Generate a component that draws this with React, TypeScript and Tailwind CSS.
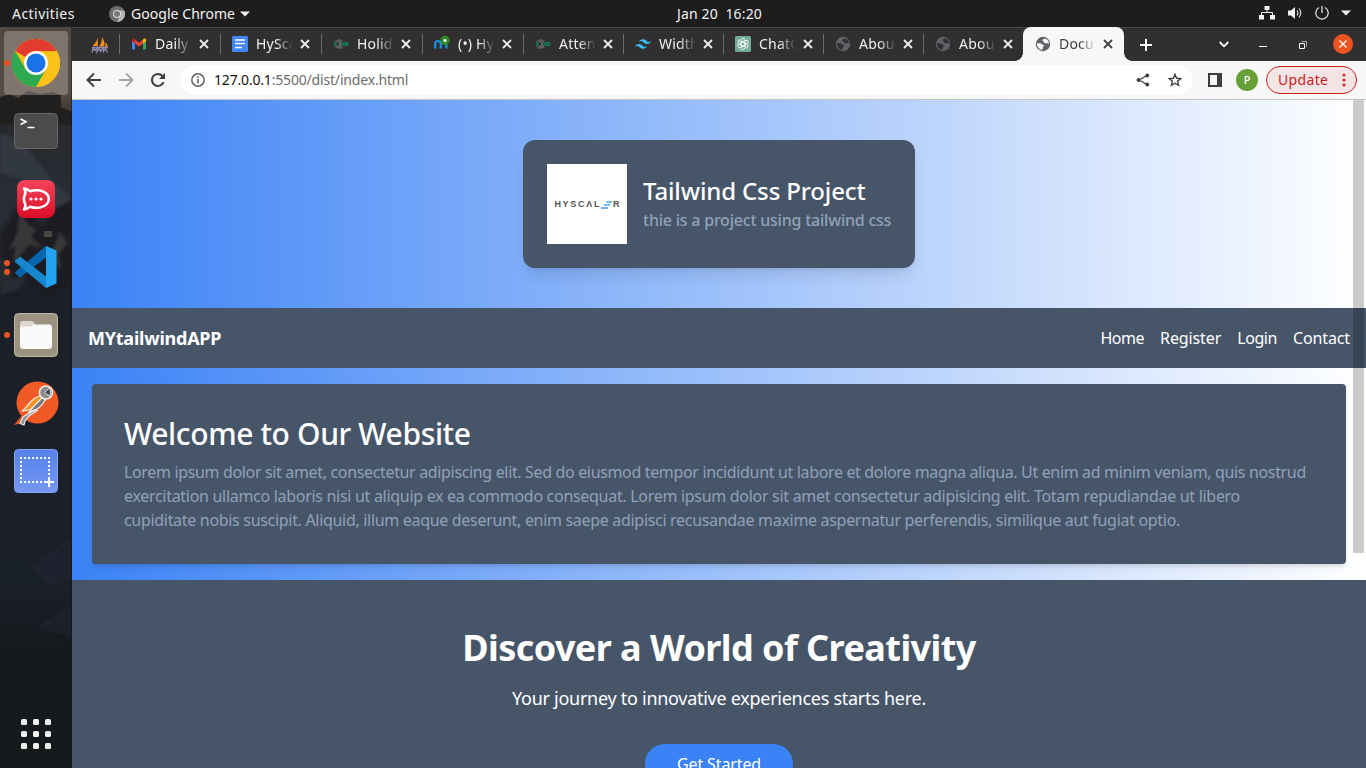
import React from "react";

type TabInfo = { label: string; icon: React.ReactNode; width: string };

function Globe({ land }: { land: string }) {
  return (
    <svg width="16" height="16" viewBox="0 0 16 16">
      <circle cx="8" cy="8" r="7.2" fill="#5f6368" />
      <path
        d="M2 7.200h3.200c1.300.1 1.500 1.700 2.900 1.600 1.100.1 1 1.200.3 1.700-.9.500-.5 1.900-1 3.300C4.300 13.600 1.800 10.800 2 7.200zM9.500 2.200c-.3 1.300-2.300.9-2.100 2.100.1 1 1.300.8 1.500 1.800.3 1.100 1.500 1.700 2.700 1.100.9-.4 1.600.4 2.300 1.200.4-2.900-1.500-5.400-4.400-6.200z"
        fill={land}
      />
    </svg>
  );
}

function Gmail() {
  return (
    <svg width="16" height="16" viewBox="0 0 16 16">
      <path d="M1 4v8.500c0 .6.400 1 1 1h2V7z" fill="#4285f4" />
      <path d="M15 4v8.500c0 .6-.4 1-1 1h-2V7z" fill="#34a853" />
      <path d="M4 3.600 8 6.700l4-3.100v3.900l-4 3-4-3z" fill="#ea4335" />
      <path d="M1 4c0-1.500 1.600-2 2.600-.9l.4.500v3.900L1 5.200z" fill="#c5221f" />
      <path d="M15 4c0-1.500-1.600-2-2.600-.9l-.4.500v3.900l3-2.300z" fill="#fbbc04" />
    </svg>
  );
}

function Sails() {
  return (
    <svg width="18" height="18" viewBox="0 0 18 18">
      <path d="M6.500 1.500 7 10H1.500C4 8 6 5 6.500 1.500zM11 1c2 3 2.800 6 2.500 9.500H8.200C10 8 11 5 11 1zM14.500 6c1.500 1.500 2 3 2 5h-2z" fill="#f29111" />
      <path d="M1 16.500 2 12l2 2.500L6 12v4l2.500-4 1 3.500 3-3.500v3.500l2-3 2 4M1 11.500h16" fill="none" stroke="#8f8bb0" strokeWidth="1.300" />
    </svg>
  );
}

function Docs() {
  return (
    <svg width="16" height="16" viewBox="0 0 16 16">
      <rect width="16" height="16" rx="1.500" fill="#4285f4" />
      <path d="M3 4h10M3 7.500h10M3 11.500h7" stroke="#fff" strokeWidth="1.700" />
    </svg>
  );
}

function Gop() {
  return (
    <svg width="16" height="16" viewBox="0 0 16 16">
      <path d="M2.500 3.800 4.500 6h3L9.500 3.800M4.800 3.500 6 4.700 7.200 3.500M2.500 12.300l2-2.200h3l2 2.200M4.800 12.500 6 11.300l1.200 1.200" stroke="#707070" strokeWidth="1.100" fill="none" />
      <path d="M1 5.500 3.300 8 1 10.300" stroke="#148a5e" strokeWidth="1.200" fill="none" />
      <path d="M8.500 7H6.800v2.200h1.700" stroke="#777" fill="none" />
      <circle cx="9.800" cy="8" r="1.200" stroke="#148a5e" strokeWidth="1.100" fill="none" />
      <path d="M12.300 10.500V6.600h1.200q1.500 0 1.500 1.300t-1.500 1.300h-1.200" stroke="#148a5e" strokeWidth="1.200" fill="none" />
    </svg>
  );
}

function Meet() {
  return (
    <svg width="16" height="16" viewBox="0 0 16 16" className="overflow-visible">
      <path d="M1.200 12.500V8q0-3 2.800-3t2.800 3v4.500M6.800 8q0-3 2.800-3t2.800 3v4.500" fill="none" stroke="#1695e8" strokeWidth="2.200" />
      <circle cx="11" cy="4.500" r="4.700" fill="#2f8a2b" />
      <circle cx="11" cy="4.500" r="1.500" fill="#fff" />
    </svg>
  );
}

function TailwindMark() {
  return (
    <svg width="16" height="16" viewBox="0 0 24 24">
      <path
        fill="#38bdf8"
        d="M12.001 4.800c-3.200 0-5.200 1.600-6 4.800 1.200-1.600 2.600-2.200 4.200-1.800.913.228 1.565.890 2.288 1.624C13.666 10.618 15.027 12 18.001 12c3.200 0 5.200-1.600 6-4.800-1.200 1.600-2.600 2.200-4.200 1.800-.913-.228-1.565-.890-2.288-1.624C16.337 6.182 14.976 4.800 12.001 4.800zm-6 7.200c-3.200 0-5.200 1.600-6 4.800 1.200-1.600 2.600-2.200 4.200-1.800.913.228 1.565.890 2.288 1.624 1.177 1.194 2.538 2.576 5.512 2.576 3.200 0 5.200-1.600 6-4.800-1.200 1.600-2.600 2.200-4.200 1.800-.913-.228-1.565-.890-2.288-1.624C10.337 13.382 8.976 12 6.001 12z"
      />
    </svg>
  );
}

function ChatMark() {
  return (
    <svg width="16" height="16" viewBox="0 0 16 16">
      <rect width="16" height="16" rx="1.500" fill="#74aa9c" />
      <g fill="none" stroke="#fff" strokeWidth="0.900">
        {[0, 60, 120, 180, 240, 300].map((a) => (
          <path key={a} transform={`rotate(${a} 8 8)`} d="M6 9.200V4.600a2.400 2.400 0 0 1 4.300-1.200M6 6.800l3.600-2.100" />
        ))}
      </g>
    </svg>
  );
}

function Cross({ className }: { className: string }) {
  return (
    <svg width="10" height="10" viewBox="0 0 10 10" className={className}>
      <path d="m1 1 8 8M9 1 1 9" stroke="currentColor" strokeWidth="1.800" fill="none" />
    </svg>
  );
}

const tabs: TabInfo[] = [
  { label: "Daily S", icon: <Gmail />, width: "w-[101px]" },
  { label: "HySca", icon: <Docs />, width: "w-[101px]" },
  { label: "Holid", icon: <Gop />, width: "w-[101px]" },
  { label: "(•) Hy", icon: <Meet />, width: "w-[101px]" },
  { label: "Atten", icon: <Gop />, width: "w-[100px]" },
  { label: "Width", icon: <TailwindMark />, width: "w-[100px]" },
  { label: "ChatG", icon: <ChatMark />, width: "w-[100px]" },
  { label: "Abou", icon: <Globe land="#322f31" />, width: "w-[100px]" },
  { label: "Abou", icon: <Globe land="#322f31" />, width: "w-[100px]" },
];

function TopBar() {
  return (
    <div className="flex h-[27px] shrink-0 items-center bg-[#1d1d1d] text-[14px] text-[#f2f2f2]">
      <span className="ml-3 w-[97px] tracking-[0.45px]">Activities</span>
      <svg width="16" height="16" viewBox="0 0 16 16">
        <circle cx="8" cy="8" r="8" fill="#6d6d6d" />
        <path d="M8 4.500h7.200A8 8 0 0 1 8 16l3-6z" fill="#b5b5b5" />
        <circle cx="8" cy="8" r="4" fill="#ddd" />
        <circle cx="8" cy="8" r="3" fill="#777" />
      </svg>
      <span className="ml-[6px] w-[109px] whitespace-nowrap tracking-[0.05px]">Google Chrome</span>
      <svg width="10" height="6" viewBox="0 0 10 6">
        <path d="M0 .5h10L5 5.500z" fill="#f2f2f2" />
      </svg>
      <span className="ml-[427px] w-[90px] pb-px whitespace-pre tracking-[0.15px]">Jan 20  16:20</span>
      <div className="ml-auto flex items-center pr-[15px] pb-px">
        <svg width="16" height="14" viewBox="0 0 16 14">
          <path d="M5.500 0h5v4h-5zM0 9h5v4.500H0zM11 9h5v4.500h-5z" fill="#f2f2f2" />
          <path d="M8 4v3M2.500 9V6.500h11V9" stroke="#f2f2f2" fill="none" />
        </svg>
        <svg width="15" height="14" viewBox="0 0 15 14" className="ml-[13px]">
          <path d="M0 4.500h3L7 1v12L3 9.500H0z" fill="#f2f2f2" />
          <path d="M9 4.500q1.800 2.500 0 5M11 2.500q3.500 4.500 0 9" stroke="#ddd" fill="none" strokeWidth="1.200" />
        </svg>
        <svg width="14" height="14" viewBox="0 0 14 14" className="ml-[12px]">
          <path d="M4 1.500a6.200 6.200 0 1 0 6 0M7 0v7" stroke="#e8e8e8" fill="none" strokeWidth="1.200" />
        </svg>
        <svg width="10" height="6" viewBox="0 0 10 6" className="ml-3">
          <path d="M0 .5h10L5 5.500z" fill="#f2f2f2" />
        </svg>
      </div>
    </div>
  );
}

function Wallpaper() {
  return (
    <svg className="absolute inset-0" width="72" height="741" viewBox="0 0 72 741">
      <defs>
        <linearGradient id="sky" x1="0" y1="0" x2="0" y2="1">
          <stop offset="0" stopColor="#51483f" />
          <stop offset="0.090" stopColor="#574c43" />
          <stop offset="0.130" stopColor="#28292d" />
          <stop offset="0.250" stopColor="#282d36" />
          <stop offset="0.360" stopColor="#1b2028" />
          <stop offset="0.750" stopColor="#1a2029" />
          <stop offset="0.850" stopColor="#15191d" />
          <stop offset="1" stopColor="#15191c" />
        </linearGradient>
        <filter id="soft" x="-10%" y="-10%" width="120%" height="120%">
          <feGaussianBlur stdDeviation="1.600" />
        </filter>
      </defs>
      <rect width="72" height="741" fill="url(#sky)" />
      <path d="M0 70 10 67l8 4 10-7 12 3 12-2 9 3v12l11 5v13L58 97 40 103 22 94 0 98z" fill="#22201f" />
      <g filter="url(#soft)">
        <path d="M0 106 20 112l30 38 22 22v24l-30-24-20-20-22-6z" fill="#3a414b" opacity=".55" />
        <path d="M0 205 9 195l7-15 8-5 18 24 14-18 16-9v85L50 270 20 250 0 262z" fill="#1c1e22" />
        <path d="m20 185 7 12 9 6-5 7 12 12-13-5-8 9-9 10 3-18-7 5 8-16zM60 205l7 11-9 12 3 14-12-8z" fill="#55534f" opacity=".5" />
        <path d="m0 230 8 6 5 16 14-4-10 15-17 5z" fill="#40474f" opacity=".3" />
        <path d="m30 540 40-28v40l-20 6zM36 600l36-20v30z" fill="#252e3b" opacity=".35" />
      </g>
      <path d="M44 204h8v6h-8z" fill="#6b6257" opacity=".6" />
      <path d="M71.500 0v741" stroke="#111" strokeOpacity=".5" />
    </svg>
  );
}

function Slot({ children, dots = 0, active = false }: { children: React.ReactNode; dots?: number; active?: boolean }) {
  return (
    <div className="relative flex h-[68px] w-full shrink-0 items-center justify-center">
      <div
        className={
          active
            ? "flex h-16 w-16 items-center justify-center rounded-[4px] bg-[#cfc6bd]/35"
            : "flex h-16 w-16 items-center justify-center"
        }
      >
        {children}
      </div>
      <div className="absolute left-1 flex flex-col gap-[3px]">
        {Array.from({ length: dots }, (_, i) => (
          <span key={i} className="size-[6px] rounded-full bg-[#e95420]" />
        ))}
      </div>
    </div>
  );
}

function Dock() {
  return (
    <aside className="relative flex w-[72px] shrink-0 flex-col overflow-hidden pt-[2px]">
      <Wallpaper />
      <Slot dots={1} active>
        <svg width="48" height="48" viewBox="0 0 48 48">
          <circle cx="24" cy="24" r="24" fill="#fbc116" />
          <path d="M24 24 3.200 12A24 24 0 0 1 44.800 12z" fill="#e33b2e" />
          <path d="M3.200 12A24 24 0 0 0 24 48l10.400-18L24 24 13.600 30z" fill="#2da94f" />
          <path d="M24 12h20.800A24 24 0 0 1 24 48l10.400-18z" fill="#fbc116" />
          <circle cx="24" cy="24" r="12" fill="#fff" />
          <circle cx="24" cy="24" r="9.500" fill="#1a73e8" />
        </svg>
      </Slot>
      <Slot>
        <svg width="44" height="36" viewBox="0 0 44 36">
          <rect x=".5" y=".5" width="43" height="35" rx="4" fill="#4b4b4b" stroke="#696969" />
          <path d="m6.500 6 5.500 2.700-5.500 2.800M13.500 14.500h7" fill="none" stroke="#fff" strokeWidth="1.600" />
        </svg>
      </Slot>
      <Slot>
        <svg width="38" height="38" viewBox="0 0 38 38">
          <defs>
            <linearGradient id="rocket" x1="0" y1="0" x2="0" y2="1">
              <stop offset="0" stopColor="#f5455c" />
              <stop offset="1" stopColor="#db0c27" />
            </linearGradient>
          </defs>
          <rect width="38" height="38" rx="8" fill="url(#rocket)" />
          <path d="M7 8.500q4 .5 6 2.800 5-1.700 10-.8 8.700 2 8.700 8.500t-8.700 8.500q-5 1-10-.8-2.500 2.300-6 2.800 2.300-2.700 1-6-2.200-4.500 0-9 1.300-3.300-1-6z" fill="none" stroke="#fff" strokeWidth="2.500" strokeLinejoin="round" />
          <g fill="#fff">
            <circle cx="14" cy="19" r="1.600" />
            <circle cx="19" cy="19" r="1.600" />
            <circle cx="24" cy="19" r="1.600" />
          </g>
        </svg>
      </Slot>
      <Slot dots={2}>
        <svg width="42" height="42" viewBox="0 0 42 42">
          <path d="M0 26.500 31 0v11.500L5 31.500z" fill="#0c66ac" />
          <path d="M0 26.500 4.500 31.500 31 11V0z" fill="#0766ad" />
          <path d="M5 10.500 0 14.500 0 16 31 42V30.500z" fill="#1686ce" />
          <path d="m31 0 10.500 4.500v33L31 42z" fill="#23a2f1" />
        </svg>
      </Slot>
      <Slot dots={1}>
        <svg width="44" height="44" viewBox="0 0 44 44">
          <rect x=".5" y=".5" width="43" height="43" rx="4" fill="#9b9280" stroke="#c0b8a7" />
          <path d="M6 16V11q0-3 3-3h8q2 0 3 1.500l2 2.500v6H6z" fill="#ded9cd" />
          <path d="M6 15q0-1.500 2-1.500h9l3-2h15.500Q38 11.500 38 14v19q0 3-3 3H9q-3 0-3-3z" fill="#faf9f8" />
        </svg>
      </Slot>
      <Slot>
        <svg width="46" height="46" viewBox="0 0 46 46">
          <circle cx="24.500" cy="22.500" r="21" fill="#f15a24" />
          <path d="M1 45 10 34v9z" fill="#e8511d" />
          <path d="m20 31-10 6-3 6.500 4 1.500 1-4 4-5 9-6z" fill="#8f9193" stroke="#eee" strokeWidth="1.200" />
          <path d="M29 15.500q3 3 3 5-3 5-7 8l-9 3.500z" fill="#77797b" stroke="#eee" strokeWidth="1.300" />
          <path d="M28 15.500q-6 1.500-11 7L9.500 31l8-1.500L29 18z" fill="#f7931e" stroke="#eee" strokeWidth="1.200" />
          <circle cx="33" cy="12.500" r="6.500" fill="#8b8b8b" stroke="#eee" strokeWidth="1.500" />
          <path d="m31.500 12.500 5-4.500q2.500 4 0 8z" fill="#464646" stroke="#eee" strokeWidth=".9" />
        </svg>
      </Slot>
      <Slot>
        <svg width="44" height="44" viewBox="0 0 44 44">
          <defs>
            <linearGradient id="shot" x1="0" y1="0" x2="0" y2="1">
              <stop offset="0" stopColor="#5681e9" />
              <stop offset="1" stopColor="#7597f5" />
            </linearGradient>
          </defs>
          <rect x=".5" y=".5" width="43" height="43" rx="4" fill="url(#shot)" stroke="#86a5f5" />
          <path d="M6 9h30M6 33h24M7 12v20M35 12v16" stroke="#fff" strokeWidth="2" strokeDasharray="2 2" />
          <path d="M35 28v10M30 33h10" stroke="#fff" strokeWidth="2" />
        </svg>
      </Slot>
      <div className="relative mt-auto mb-[19px] grid grid-cols-3 gap-[6px] self-center">
        {Array.from({ length: 9 }, (_, i) => (
          <span key={i} className="size-[6px] rounded-[1.500px] bg-[#f4f2ef]" />
        ))}
      </div>
    </aside>
  );
}

function TabStrip() {
  return (
    <div className="flex h-[34px] shrink-0 border-t border-[#484648] bg-[#322f31]">
      <div className="flex w-[47px] items-center justify-end pr-[10px]">
        <Sails />
      </div>
      {tabs.map((t, i) => (
        <div key={i} className={`flex items-center pb-px ${t.width}`}>
          <span className="h-5 w-px bg-[#6b696a]" />
          <span className="ml-[11px] w-4">{t.icon}</span>
          <span className="ml-2 w-[37px] overflow-hidden pb-px text-[14px] tracking-[0.2px] whitespace-nowrap text-[#f0f0f0] [mask-image:linear-gradient(90deg,#000_55%,transparent)]">
            {t.label}
          </span>
          <Cross className="ml-[7px] text-[#f0f0f0]" />
        </div>
      ))}
      <div className="relative -mt-px flex h-[34px] w-[101px] items-center rounded-t-[8px] bg-[#f7f7f7]">
        <span className="absolute -left-2 bottom-0 size-2 bg-[radial-gradient(circle_at_0_0,transparent_7.500px,#f7f7f7_8px)]" />
        <span className="absolute -right-2 bottom-0 size-2 bg-[radial-gradient(circle_at_100%_0,transparent_7.500px,#f7f7f7_8px)]" />
        <span className="ml-3 w-4">
          <Globe land="#f7f7f7" />
        </span>
        <span className="ml-2 w-[37px] overflow-hidden pb-px text-[14px] tracking-[0.2px] whitespace-nowrap text-[#3c4043] [mask-image:linear-gradient(90deg,#000_55%,transparent)]">
          Docu
        </span>
        <Cross className="ml-[7px] text-[#3c4043]" />
      </div>
      <div className="flex flex-1 items-center text-white">
        <svg width="12" height="12" viewBox="0 0 12 12" className="ml-4">
          <path d="M6 0v12M0 6h12" stroke="currentColor" strokeWidth="2" />
        </svg>
        <svg width="10" height="7" viewBox="0 0 10 7" className="ml-auto">
          <path d="m.7 1 4.300 4.300L9.300 1" stroke="currentColor" strokeWidth="1.800" fill="none" />
        </svg>
        <span className="mt-1 ml-[30px] h-px w-2 bg-white" />
        <svg width="8" height="8" viewBox="0 0 8 8" className="ml-8">
          <path d="M.5 2.500h5v5h-5z" stroke="#fff" fill="none" />
          <path d="M2.500.5h5v5" stroke="#aaa" fill="none" />
        </svg>
        <span className="mr-[13px] mb-px ml-[26px] flex size-5 items-center justify-center rounded-full bg-[#e95420]">
          <svg width="8" height="8" viewBox="0 0 8 8">
            <path d="m.5.5 7 7M7.500.5l-7 7" stroke="#fff" strokeWidth="1.200" />
          </svg>
        </span>
      </div>
    </div>
  );
}

function Toolbar() {
  return (
    <div className="flex h-[39px] shrink-0 items-center border-b border-[#c4c4c2] bg-[#f7f7f7] text-[#3c3f42]">
      <svg width="16" height="16" viewBox="0 0 16 16" className="ml-[14px]">
        <path d="M15 8H2M8 1.500 1.500 8 8 14.500" stroke="currentColor" strokeWidth="1.900" fill="none" />
      </svg>
      <svg width="16" height="16" viewBox="0 0 16 16" className="ml-4 text-[#a5a6a7]">
        <path d="M1 8h13M8 1.500 14.500 8 8 14.500" stroke="currentColor" strokeWidth="1.900" fill="none" />
      </svg>
      <svg width="16" height="16" viewBox="0 0 16 16" className="ml-4">
        <path d="M13.500 10.200A6 6 0 1 1 12.400 4L14 5.500" stroke="currentColor" strokeWidth="2" fill="none" />
        <path d="M15 1v6H9z" fill="currentColor" />
      </svg>
      <div className="ml-[14px] flex h-[30px] w-[1013px] items-center rounded-full bg-white px-[11px]">
        <svg width="14" height="14" viewBox="0 0 14 14" className="text-[#5f6368]">
          <circle cx="7" cy="7" r="6.200" stroke="currentColor" strokeWidth="1.500" fill="none" />
          <path d="M7 6v4.500M7 3.300v1.600" stroke="currentColor" strokeWidth="1.600" />
        </svg>
        <span className="ml-[9px] pb-[2px] text-[14px] tracking-[-0.18px] text-[#6a6c6f]">
          <span className="text-[#111]">127.0.0.1</span>:5500/dist/index.html
        </span>
        <svg width="14" height="14" viewBox="0 0 14 14" className="ml-auto">
          <path d="M11 2.500 3 7l8 4.500" stroke="currentColor" strokeWidth="1.300" fill="none" />
          <g fill="currentColor">
            <circle cx="11.200" cy="2.500" r="1.900" />
            <circle cx="2.500" cy="7" r="1.900" />
            <circle cx="11.200" cy="11.500" r="1.900" />
          </g>
        </svg>
        <svg width="14" height="14" viewBox="0 0 14 14" className="ml-[18px]">
          <path d="m7 1.500 1.600 3.800 4.100.3-3.100 2.700 1 4L7 10.200l-3.600 2.100 1-4L1.300 5.600l4.100-.3z" stroke="currentColor" strokeWidth="1.400" fill="none" />
        </svg>
      </div>
      <svg width="14" height="14" viewBox="0 0 14 14" className="ml-[15px]">
        <path d="M0 0h14v14H0zM2 2v10h7V2z" fillRule="evenodd" fill="currentColor" />
      </svg>
      <span className="ml-[14px] flex size-[22px] items-center justify-center rounded-full bg-[#689f38] text-[11px] font-medium text-white">P</span>
      <span className="ml-2 flex h-7 w-[91px] items-center rounded-full border border-[#c5221f] bg-[#f4e5e5] pl-[11px] text-[14px] text-[#c5221f]">
        <span className="w-[64px] pb-[2px] tracking-[0.35px]">Update</span>
        <svg width="4" height="14" viewBox="0 0 4 14" fill="#d93025">
          <circle cx="2" cy="2" r="1.600" />
          <circle cx="2" cy="7" r="1.600" />
          <circle cx="2" cy="12" r="1.600" />
        </svg>
      </span>
    </div>
  );
}

function HyscalerLogo() {
  return (
    <div className="flex size-20 shrink-0 items-center justify-center bg-white pt-px font-['Liberation_Sans',sans-serif] text-[9px] font-bold text-[#555]">
      <span className="tracking-[1.700px]">HYSCΛL</span>
      <svg width="12" height="8" viewBox="0 0 12 8">
        <path d="M5 1h6M3 4h6" stroke="#43a5f5" strokeWidth="1.300" />
        <path d="M0 7h7" stroke="#2f7de8" strokeWidth="1.300" />
      </svg>
      <span>R</span>
    </div>
  );
}

function Page() {
  return (
    <main className="relative min-h-0 flex-1 overflow-hidden bg-[linear-gradient(90deg,#3b82f6,#fff)]">
      <header className="flex justify-center py-10">
        <div className="flex h-32 w-[392px] items-center gap-4 rounded-xl bg-[#475569] p-6 shadow-lg">
          <HyscalerLogo />
          <div className="whitespace-nowrap">
            <h1 className="pb-[2px] text-2xl leading-[30px] font-medium tracking-[-0.14px] text-white">Tailwind Css Project</h1>
            <p className="text-base leading-6 font-medium tracking-[-0.22px] text-slate-400">thie is a project using tailwind css</p>
          </div>
        </div>
      </header>
      <nav className="flex h-[60px] items-center justify-between bg-[#475569] px-4 text-white">
        <span className="text-lg font-bold tracking-[-0.23px]">MYtailwindAPP</span>
        <div className="flex gap-4 text-base">
          <a className="tracking-[-0.48px]">Home</a>
          <a className="tracking-[-0.12px]">Register</a>
          <a className="tracking-[-0.4px]">Login</a>
          <a className="tracking-[-0.14px]">Contact</a>
        </div>
      </nav>
      <section className="mx-5 my-4 h-[180px] rounded-[4px] bg-[#475569] p-8 whitespace-nowrap shadow-md">
        <h2 className="mb-2 text-3xl leading-9 font-medium tracking-[-0.37px] text-white">Welcome to Our Website</h2>
        <p className="text-base leading-6 text-slate-400">
          <span className="block tracking-[-0.345px]">Lorem ipsum dolor sit amet, consectetur adipiscing elit. Sed do eiusmod tempor incididunt ut labore et dolore magna aliqua. Ut enim ad minim veniam, quis nostrud</span>
          <span className="block tracking-[-0.297px]">exercitation ullamco laboris nisi ut aliquip ex ea commodo consequat. Lorem ipsum dolor sit amet consectetur adipisicing elit. Totam repudiandae ut libero</span>
          <span className="block tracking-[-0.31px]">cupiditate nobis suscipit. Aliquid, illum eaque deserunt, enim saepe adipisci recusandae maxime aspernatur perferendis, similique aut fugiat optio.</span>
        </p>
      </section>
      <section className="flex flex-col items-center bg-[#475569] py-12 text-white">
        <h2 className="mb-4 text-4xl leading-10 font-bold tracking-[-0.57px]">Discover a World of Creativity</h2>
        <p className="mb-8 text-lg leading-7 tracking-[-0.275px]">Your journey to innovative experiences starts here.</p>
        <button className="w-[148px] rounded-full bg-[#3b82f6] py-2 text-base tracking-[-0.12px]">Get Started</button>
      </section>
      <div className="absolute top-0 right-[2px] h-[453px] w-[11px] bg-black/20" />
    </main>
  );
}

export default function App() {
  return (
    <div className="flex h-[768px] w-[1366px] flex-col overflow-hidden font-['Noto_Sans',sans-serif]">
      <TopBar />
      <div className="flex min-h-0 flex-1">
        <Dock />
        <div className="flex min-w-0 flex-1 flex-col">
          <TabStrip />
          <Toolbar />
          <Page />
        </div>
      </div>
    </div>
  );
}
